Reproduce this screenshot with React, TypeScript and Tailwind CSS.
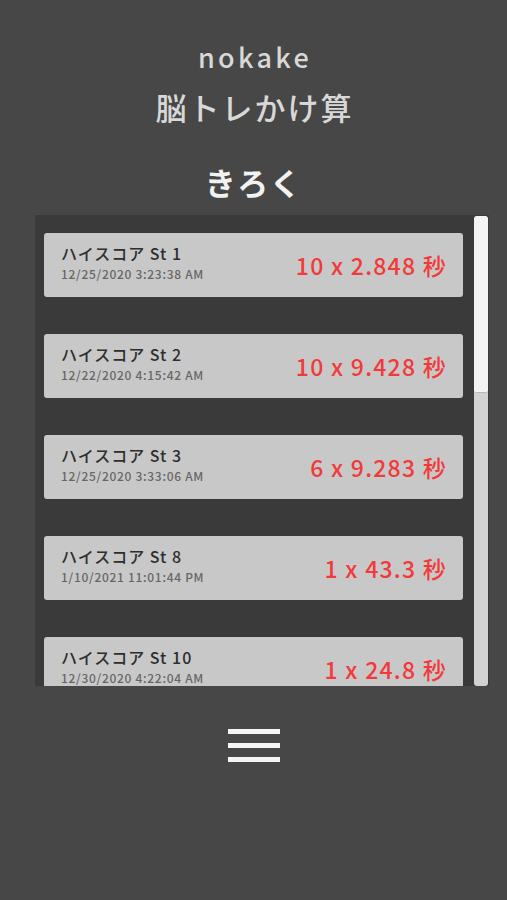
import React from "react";

const records = [
  { stage: "ハイスコア St 1", date: "12/25/2020 3:23:38 AM", score: "10 x 2.848 秒" },
  { stage: "ハイスコア St 2", date: "12/22/2020 4:15:42 AM", score: "10 x 9.428 秒" },
  { stage: "ハイスコア St 3", date: "12/25/2020 3:33:06 AM", score: "6 x 9.283 秒" },
  { stage: "ハイスコア St 8", date: "1/10/2021 11:01:44 PM", score: "1 x 43.3 秒" },
  { stage: "ハイスコア St 10", date: "12/30/2020 4:22:04 AM", score: "1 x 24.8 秒" },
];

function RecordCard({ stage, date, score }: { stage: string; date: string; score: string }) {
  return (
    <div className="h-[64px] w-[419px] shrink-0 rounded-[3px] bg-[#c8c8c8] pl-[17px] pr-[16px] flex items-center justify-between">
      <div className="self-start pt-[10px] flex flex-col">
        <span className="text-[16px] leading-[20px] font-medium text-[#2e2e2e] tracking-[1px]">{stage}</span>
        <span className="mt-[3px] text-[12px] leading-[15px] font-medium text-[#666666] tracking-[0.7px]">{date}</span>
      </div>
      <span className="text-[23px] leading-[28px] font-medium text-[#f23a3a] tracking-[1.25px]">{score}</span>
    </div>
  );
}

export default function App() {
  return (
    <div
      className="w-full h-[900px] bg-[#474747] flex flex-col items-center overflow-hidden"
      style={{ fontFamily: '"Noto Sans CJK JP", "Noto Sans", sans-serif' }}
    >
      {/* Title */}
      <div className="mt-[41px] h-[32px] leading-[32px] text-[27px] font-medium text-[#d8d8d8] tracking-[3.3px] pl-[3px]">nokake</div>
      <div className="mt-[18px] h-[32px] leading-[32px] text-[31px] font-medium text-[#d8d8d8] tracking-[2px] pl-[2px]">脳トレかけ算</div>
      <div className="mt-[41px] h-[36px] leading-[36px] text-[31px] font-bold text-[#f2f2f2] tracking-[1.5px]">きろく</div>

      {/* Record list */}
      <div className="mt-[15px] self-start ml-[35px] w-[454px] h-[471px] bg-[#3a3a3a] flex overflow-hidden">
        <div className="pl-[9px] pt-[18px] flex flex-col gap-[37px]">
          {records.map((r) => (
            <RecordCard key={r.stage} {...r} />
          ))}
        </div>
        <div className="ml-[11px] mt-[1px] w-[14px] h-[470px] rounded-[3px] bg-[#d2d2d2] flex flex-col overflow-hidden">
          <div className="h-[177px] rounded-[3px] bg-[#f3f3f3] border-b border-[#b8b8b8]" />
        </div>
      </div>

      {/* Menu */}
      <div className="mt-[43px] flex flex-col gap-[9px]">
        <div className="w-[52px] h-[5px] bg-[#f5f5f5]" />
        <div className="w-[52px] h-[5px] bg-[#f5f5f5]" />
        <div className="w-[52px] h-[5px] bg-[#f5f5f5]" />
      </div>
    </div>
  );
}
